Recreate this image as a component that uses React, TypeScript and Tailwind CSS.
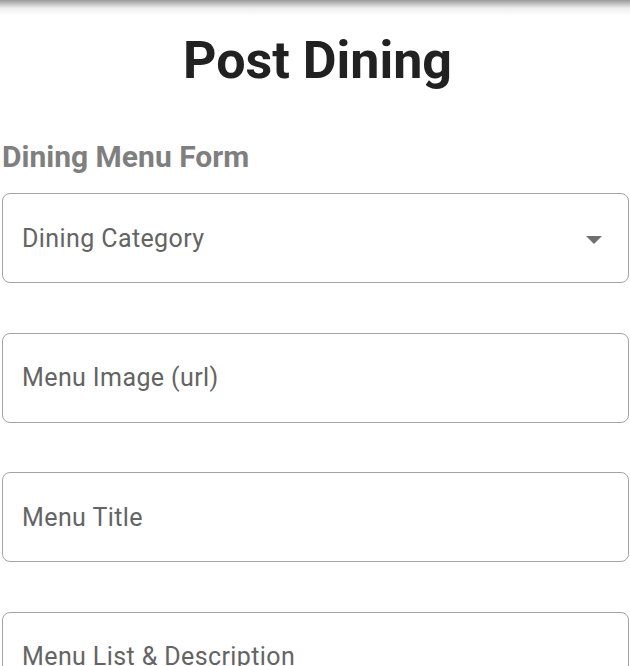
import React from "react";

type FieldProps = {
  label: string;
  select?: boolean;
};

function Field({ label, select }: FieldProps) {
  return (
    <div className="flex h-[90px] items-center justify-between rounded-[8px] border-[1.5px] border-[#a3a3a3] bg-white pl-[19px] pr-[26px]">
      <span className="text-[25px] leading-none tracking-[0.4px] text-[#646464]">{label}</span>
      {select && (
        <svg width="16" height="8" viewBox="0 0 16 8" className="mt-[3px]">
          <path d="M0 0 L16 0 L8 8 Z" fill="#707070" />
        </svg>
      )}
    </div>
  );
}

export default function App() {
  const fields: FieldProps[] = [
    { label: "Dining Category", select: true },
    { label: "Menu Image (url)" },
    { label: "Menu Title" },
    { label: "Menu List & Description" },
  ];

  return (
    <div
      className="relative h-[666px] w-[630px] overflow-hidden bg-white"
      style={{ fontFamily: "Roboto, 'Noto Sans', sans-serif" }}
    >
      <div className="absolute inset-x-0 top-0 h-[16px] bg-gradient-to-b from-[#9a9a9a] via-[#eeeeee] to-white" />
      <h1 className="pl-[5px] pt-[26px] text-center text-[52px] font-bold leading-[70px] text-[#212121]">
        Post Dining
      </h1>
      <section className="pl-[2px] pt-[46px]">
        <h2 className="text-[30px] font-bold leading-[30px] text-[#7f7f7f]">
          Dining Menu Form
        </h2>
        <div className="mt-[21px] flex flex-col gap-[49.5px] pr-px">
          {fields.map((f) => (
            <Field key={f.label} {...f} />
          ))}
        </div>
      </section>
    </div>
  );
}
